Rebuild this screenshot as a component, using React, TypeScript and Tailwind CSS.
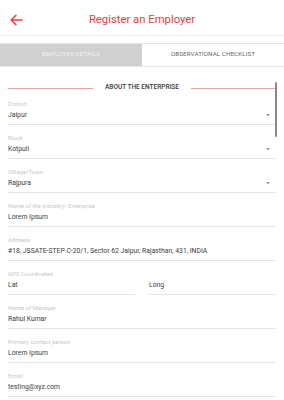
import React from "react";

const RED = "#e53e3e";

function Chevron() {
  return (
    <svg width="4" height="3" viewBox="0 0 4 3" className="shrink-0">
      <path d="M0 0 L4 0 L2 2.6 Z" fill="#9a9a9a" />
    </svg>
  );
}

function Field({ label, value, select }: { label: string; value: string; select?: boolean }) {
  return (
    <div className="h-[34px] pt-[9px] border-b border-[#e6e6e6] flex flex-col">
      <div className="h-[8px] leading-[8px] text-[6px] text-[#c8c8c8]">{label}</div>
      <div className="mt-[2px] h-[10px] flex items-center justify-between">
        <span className="text-[6.8px] leading-[10px] text-[#404040]">{value}</span>
        {select && (
          <span className="mr-[6px]">
            <Chevron />
          </span>
        )}
      </div>
    </div>
  );
}

export default function App() {
  return (
    <div
      className="w-[284px] h-[400px] bg-white overflow-hidden relative"
      style={{ fontFamily: "Roboto, 'Liberation Sans', sans-serif" }}
    >
      {/* Header */}
      <div className="h-[36px] border-b border-[#eeeeee] flex items-center relative">
        <div className="pl-[10px] pt-[4px]">
          <svg width="13" height="12" viewBox="0 0 13 12" fill="none">
            <path d="M12 6 H1.5 M6 1.2 L1.2 6 L6 10.8" stroke={RED} strokeWidth="1.5" strokeLinecap="round" strokeLinejoin="round" />
          </svg>
        </div>
        <div className="absolute left-0 right-0 top-[12px] text-center text-[11.3px] leading-[16px]" style={{ color: RED }}>
          Register an Employer
        </div>
      </div>

      {/* Tabs */}
      <div className="mt-[7px] h-[24px] border-y border-[#e6e6e6] flex">
        <div className="w-[142px] bg-[#d0d0d0] flex items-center justify-center text-[6.2px] tracking-[0.1px] text-[#f2f2f2]">
          EMPLOYER DETAILS
        </div>
        <div className="flex-1 flex items-center justify-center text-[6.2px] tracking-[0.1px] text-[#666666]">
          OBSERVATIONAL CHECKLIST
        </div>
      </div>

      {/* Form */}
      <div className="px-[8px]">
        <div className="h-[24px] pt-[15px]">
          <div className="h-[12px] flex items-center">
            <div className="w-[85px] h-px bg-[#eda0a0]" />
            <div className="flex-1 text-center text-[6.5px] font-medium text-[#3a3a3a]">ABOUT THE ENTERPRISE</div>
            <div className="w-[85px] h-px bg-[#eda0a0]" />
          </div>
        </div>
        <Field label="District" value="Jaipur" select />
        <Field label="Block" value="Kotpuli" select />
        <Field label="Village/Town" value="Rajpura" select />
        <Field label="Name of the Industry/ Enterprise" value="Lorem Ipsum" />
        <Field label="Address" value="#18, JSSATE-STEP C-20/1, Sector 62 Jaipur, Rajasthan, 431, INDIA" />
        <div className="h-[34px] pt-[9px] flex flex-col">
          <div className="h-[8px] leading-[8px] text-[6px] text-[#c8c8c8]">GPS Coordinates</div>
          <div className="mt-[2px] flex gap-[14px]">
            <div className="flex-1 h-[15px] border-b border-[#e6e6e6] text-[6.8px] leading-[10px] text-[#404040]">Lat</div>
            <div className="flex-1 h-[15px] border-b border-[#e6e6e6] text-[6.8px] leading-[10px] text-[#404040]">Long</div>
          </div>
        </div>
        <Field label="Name of Manager" value="Rahul Kumar" />
        <Field label="Primary contact person" value="Lorem Ipsum" />
        <Field label="Email" value="testing@xyz.com" />
      </div>

      {/* Scrollbar */}
      <div className="absolute left-[275px] top-[82px] w-[2px] h-[55px] bg-[#8a8a8a] rounded-full" />
    </div>
  );
}
